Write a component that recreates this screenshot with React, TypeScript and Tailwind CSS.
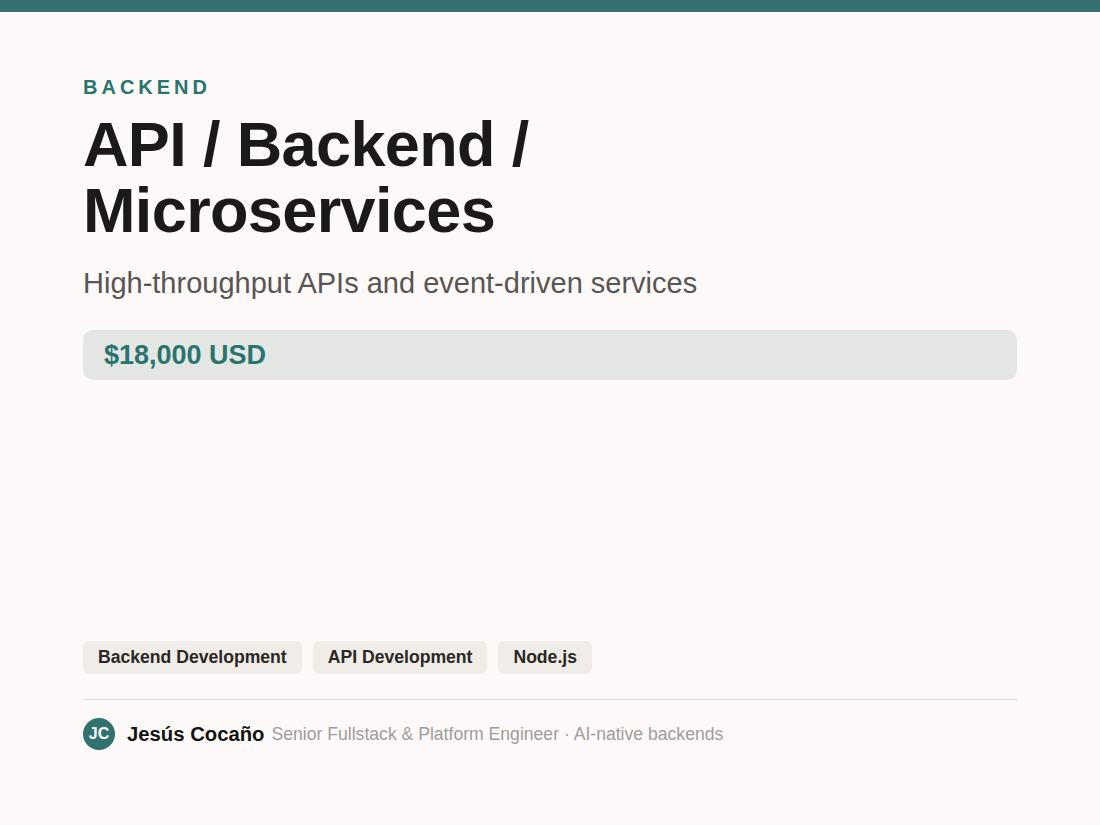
export default function App() {
  return (
    <div className="min-h-[825px] h-[825px] flex flex-col bg-[#fcf9f8]" style={{ fontFamily: '"Liberation Sans", Arial, sans-serif' }}>
      <div className="h-[12px] bg-[#35726f] shrink-0" />
      <div className="flex-1 flex flex-col px-[83px] pt-[63px] pb-[75px]">
        <div className="text-[20px] font-bold tracking-[0.2em] text-[#2a7470] leading-[24px]">BACKEND</div>
        <h1 className="mt-[12px] text-[63px] font-bold text-[#1c1a18] leading-[66px] tracking-[-0.01em]">API / Backend /<br />Microservices</h1>
        <div className="mt-[22px] text-[29px] text-[#595553] leading-[36px]">High-throughput APIs and event-driven services</div>
        <div className="mt-[29px] h-[50px] rounded-[10px] bg-[#e3e6e3] flex items-center px-[21px] text-[27px] font-bold text-[#2a7470]">$18,000 USD</div>
        <div className="flex-1" />
        <div className="flex gap-[11px]">
          {["Backend Development", "API Development", "Node.js"].map(t => (
            <span key={t} className="h-[33px] px-[15px] rounded-[6px] bg-[#f0ece7] flex items-center text-[17.6px] font-bold text-[#2a2724]">{t}</span>
          ))}
        </div>
        <div className="mt-[25px] h-px bg-[#dedad7]" />
        <div className="mt-[18px] flex items-center">
          <div className="w-[32px] h-[32px] rounded-full bg-[#2f726e] text-white text-[16px] font-bold flex items-center justify-center">JC</div>
          <span className="ml-[12px] text-[20.3px] font-bold text-[#151311]">Jesús Cocaño</span>
          <span className="ml-[7px] text-[17.6px] text-[#a19d9a]">Senior Fullstack &amp; Platform Engineer · AI-native backends</span>
        </div>
      </div>
    </div>
  );
}
